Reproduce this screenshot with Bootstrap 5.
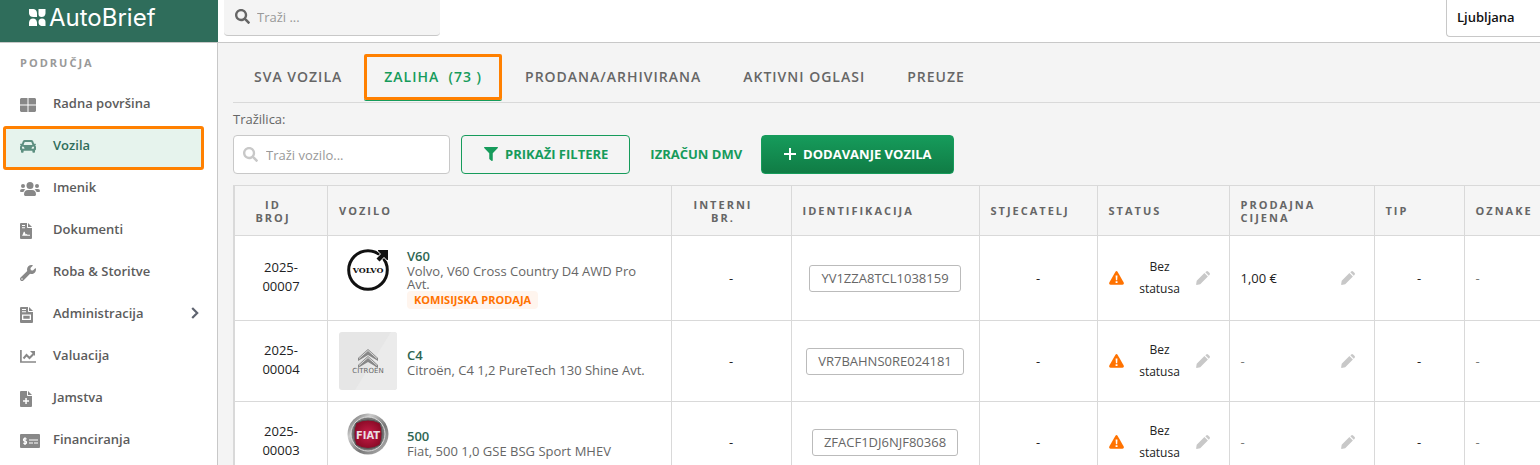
<!DOCTYPE html>
<html lang="hr">
<head>
<meta charset="utf-8">
<meta name="viewport" content="width=device-width, initial-scale=1">
<title>AutoBrief – Vozila</title>
<link rel="stylesheet" href="https://cdn.jsdelivr.net/npm/bootstrap@5.3.0/dist/css/bootstrap.min.css">
<style>
:root{--ab-green:#169b5b;--ab-dark:#2f6d5b;--ab-line:#d9d9d9;--ab-grey:#666;--ab-orange:#ff8000}
body{font-family:"Open Sans","Noto Sans",sans-serif;font-size:13px;line-height:18px;color:#222;background:#f4f4f4}
svg{display:block;flex:none}
.topbar{height:43px;border-bottom:1px solid #c8c8c8}
.brand-box{width:218px;background:var(--ab-dark);padding:0 0 7px 29px;font:400 24px/28px Inter,sans-serif;gap:3px}
.global-search{width:216px;height:36px;background:#f4f4f4;border-bottom:1px solid #c8c8c8;border-radius:0 0 4px 4px;margin-left:6px;padding:0 11px 2px;gap:7px}
.global-search svg{color:#666}
.bare-input{border:0;background:none;outline:0;min-width:0;padding:0}
.bare-input::placeholder{color:#999;opacity:1}
.city-select{width:94px;height:37px;border:1px solid #c8c8c8;border-width:0 0 1px 1px;border-radius:0 0 0 4px;appearance:none;padding:0 10px 2px;background:#fff;color:#111;font-weight:600}
.sidebar{width:218px;border-right:1px solid #c8c8c8;padding:11px 13px 0 3px}
.side-title{font-size:11px;font-weight:700;letter-spacing:2px;color:#999;padding-left:17px;margin-bottom:13px}
.side-link{height:42px;padding:0 5px 6px 17px;color:#5c5c5c;font-weight:600;text-decoration:none}
.side-link .ico{width:33px;color:#888;padding-top:3px}
.side-link.active{height:44px;margin:-1px 0;padding:0 2px 6px 14px;border:3px solid var(--ab-orange);border-radius:3px;background:#e6f3ed;color:var(--ab-dark)}
.side-link.active .ico{color:#5d8f80}
.content-area{min-width:0;padding-left:15px}
.tabs{height:60px;border-bottom:1px solid var(--ab-line);padding-top:11px}
.tabs a{display:flex;align-items:center;padding:0 21px;height:46px;font-size:14px;font-weight:600;letter-spacing:1px;color:#666;text-decoration:none;white-space:pre}
.tabs a.active{color:var(--ab-green);border:3px solid var(--ab-orange);border-radius:2px;padding:0 17px;margin:0 2px 0 1px;box-shadow:0 1px 0 var(--ab-green)}
.search-label{color:#666;margin:7px 0}
.toolbar{font-weight:700;margin-bottom:11px}
.toolbar .field{width:217px;height:39px;background:#fff;border:1px solid #c8c8c8;border-radius:4px;padding:0 9px;margin-right:11px}
.toolbar .field svg{color:#c8c8c8}
.toolbar .btn{height:39px;font-size:13px;line-height:18px;font-weight:700;border-radius:4px;display:flex;align-items:center;padding:0 21px 1px 22px;gap:7px}
.btn-line{border:1px solid var(--ab-green);color:var(--ab-green)}
.btn-fill{border:1px solid var(--ab-green);color:#fff;background:linear-gradient(#169b5b,#107c45)}
.text-action{color:var(--ab-green);text-decoration:none;margin:0 19px 1px 20px}
.table-box{border-left:1px solid var(--ab-line)}
.stock{table-layout:fixed;margin:0;border-collapse:collapse;width:100%;background:#fff}
.stock th,.stock td{border:1px solid var(--ab-line);vertical-align:middle;padding:10px 11px}
.stock th:last-child,.stock td:last-child{border-right:0}
.stock td{padding:11px}
.stock th{height:50px;font-size:11px;line-height:13px;letter-spacing:2px;font-weight:700;color:#666;background:#f5f5f5}
.stock th.mid{padding-right:27px;text-align:center}
.stock td.mid{text-align:center}
.stock td.id-cell{line-height:19px;padding-bottom:13px}
.brand-slot{width:58px;height:58px;margin-right:10px}
.model{color:#2f6653;font-weight:600;text-decoration:none;line-height:18px;display:block}
.descr{color:#666;line-height:13px}
.tag-sale{width:fit-content;height:18px;padding:0 7px;font-size:11px;font-weight:700;color:#ff7200;background:#fff5ee;border-radius:4px;line-height:18px}
.vin{display:block;width:fit-content;margin:0 auto;border:1px solid #bbb;border-radius:3px;font-size:13px;line-height:25px;padding:0 11px;color:#666}
.stat{font-size:12px;line-height:22px;width:50px;text-align:center}
.stock td.edit{padding:0 19px 0 11px}
.pen{border:0;background:none;padding:0;color:#c8c8c8}
.muted{color:#777}
</style>
</head>
<body>
<svg width="0" height="0" class="position-absolute" aria-hidden="true">
  <symbol id="i-search" viewBox="0 0 512 512"><path fill="currentColor" d="M505 442.7L405.3 343c-4.500-4.500-10.600-7-17-7H372c27.600-35.300 44-79.700 44-128C416 93.100 322.900 0 208 0S0 93.100 0 208s93.100 208 208 208c48.300 0 92.700-16.400 128-44v16.300c0 6.400 2.500 12.500 7 17l99.700 99.700c9.400 9.400 24.600 9.400 33.900 0l28.300-28.300c9.400-9.400 9.400-24.600.1-34zM208 336c-70.700 0-128-57.200-128-128 0-70.700 57.200-128 128-128 70.700 0 128 57.200 128 128 0 70.700-57.200 128-128 128z"/></symbol>
  <symbol id="i-pen" viewBox="0 0 14 14"><path fill="currentColor" d="M8.400 2.100l3.500 3.500L4.200 13.300.6 13.900.1 13.400.7 9.800zM9.300 1.200l.9-.8q.9-.8 1.900 0l1.500 1.500q.8.900 0 1.900l-.8.900z"/></symbol>
  <symbol id="i-warn" viewBox="0 0 15 14"><path fill="#ff7200" d="M6.300.9q1.200-1.700 2.400 0l6 10.600q.7 1.900-1.200 2.200H1.500Q-.4 13.400.3 11.500z"/><path fill="#fff" d="M6.600 4.500h1.900l-.3 4.700H6.900zM6.600 10.200h1.900v1.800H6.600z"/></symbol>
</svg>

<div class="d-flex flex-column vh-100 overflow-hidden">
<header class="topbar bg-white d-flex flex-shrink-0 align-items-start">
  <div class="brand-box text-white d-flex align-items-center align-self-stretch">
    <svg width="17" height="17" viewBox="0 0 17 17" fill="#fff"><path d="M0 0h4.500Q8 .5 8 4.500V8H4.500Q.5 8 0 4.500zM9.500 0H16.500v4.500q-.5 3.500-4 3.500-3 0-3-3zM0 17v-3.500q.5-4 4-4t4 4V17zM16.500 17h-4q-3-.5-3-4t3.500-3.500 3.500 3.500z"/></svg>
    <span>AutoBrief</span>
  </div>
  <label class="global-search d-flex align-items-center"><svg width="15" height="15"><use href="#i-search"/></svg><input class="bare-input" type="text" placeholder="Traži ..." aria-label="Traži"></label>
  <select class="city-select ms-auto" aria-label="Poslovnica"><option>Ljubljana</option></select>
</header>

<div class="d-flex flex-grow-1 overflow-hidden">
<nav class="sidebar bg-white flex-shrink-0">
  <div class="side-title">PODRUČJA</div>
  <a href="#" class="side-link d-flex align-items-center"><span class="ico"><svg width="16" height="14" viewBox="0 0 16 14" fill="currentColor"><path d="M1 0h6.500v6.500H0V1zM8.500 0H15l1 1v5.500H8.500zM0 7.500h7.500V14H1l-1-1zM8.500 7.500H16V13l-1 1H8.500z"/></svg></span>Radna površina</a>
  <a href="#" class="side-link active d-flex align-items-center"><span class="ico"><svg width="16" height="13" viewBox="0 0 16 13" fill="currentColor"><path fill-rule="evenodd" d="M4.800 0h6.400q1.400 0 2 1.300l.9 2.400h1.400q.6.300.4.900l-.7.900q.8.600.8 1.500v2.400l-1 1v1.600q0 .8-.8.8h-1q-.8 0-.8-.8v-1.200H3.600V12q0 .8-.8.8h-1Q1 12.800 1 12v-1.600l-1-1V7q0-.9.800-1.500l-.7-.9q-.2-.6.4-.9h1.400l.9-2.400Q3.400 0 4.800 0zm.4 2q-.6 0-.8.600l-.8 2.300h8.800l-.8-2.300q-.2-.6-.8-.6zM3 6.600a1.100 1.100 0 100 2.200h1.500Q4.400 7 3 6.600zm10 0q-1.400.4-1.500 2.200H13a1.100 1.100 0 000-2.200z"/></svg></span>Vozila</a>
  <a href="#" class="side-link d-flex align-items-center"><span class="ico"><svg width="20" height="14" viewBox="0 0 20 14" fill="currentColor"><circle cx="10" cy="3.500" r="3.500"/><circle cx="3" cy="4" r="2"/><circle cx="17" cy="4" r="2"/><path d="M4 12.600Q4 8 8 8h4q4 0 4 4.600 0 1.400-1.200 1.400H5.200Q4 14 4 12.600zM0 9q0-2 2-2h2l1.400.6Q3.600 8.700 3.400 10H1q-1 0-1-1zM20 9q0-2-2-2h-2l-1.400.6q1.800 1.100 2 2.400H19q1 0 1-1z"/></svg></span>Imenik</a>
  <a href="#" class="side-link d-flex align-items-center"><span class="ico"><svg width="12" height="16" viewBox="0 0 12 16" fill="currentColor"><path fill-rule="evenodd" d="M1 0h6v4.200q0 .8.800.8H12v10q0 1-1 1H1q-1 0-1-1V1q0-1 1-1zm1 2v1h3V2zm0 2.200v1h3v-1zM2 12.800h8v-1H7.500l-1-.8-.8.5L4.600 8.800h-.8L2.500 12z"/><path d="M8 0l4 4H8z"/></svg></span>Dokumenti</a>
  <a href="#" class="side-link d-flex align-items-center"><span class="ico"><svg width="16" height="16" viewBox="0 0 512 512" fill="currentColor"><path d="M507.700 109.100c-2.200-9-13.500-12.100-20.100-5.500l-74.400 74.400-67.900-11.300-11.300-67.900 74.400-74.400c6.600-6.600 3.400-17.900-5.700-20.200-47.400-11.700-99.500.9-136.600 37.900-39.600 39.600-50.500 97.100-34 147.200L18.700 402.800c-25 25-25 65.500 0 90.500s65.500 25 90.500 0l213.200-213.200c50.100 16.700 107.500 5.700 147.400-34.200 37.100-37.100 49.700-89.300 37.900-136.800zM64 472a24 24 0 110-48 24 24 0 010 48z"/></svg></span>Roba &amp; Storitve</a>
  <a href="#" class="side-link d-flex align-items-center"><span class="ico"><svg width="13" height="16" viewBox="0 0 13 16" fill="currentColor"><path fill-rule="evenodd" d="M1 0h7v4.200q0 .8.800.8H13v10q0 1-1 1H1q-1 0-1-1V1q0-1 1-1zm1 2v1h4V2zm0 2.200v1h4v-1zM2 7.500V13h9V7.500zm1.300 1.200h6.400v3H3.300z"/><path d="M9 0l4 4H9z"/></svg></span>Administracija<svg class="ms-auto" width="8" height="12" viewBox="0 0 8 12" fill="none" stroke="#5f6470" stroke-width="2.200"><path d="M1.200 1l5 5-5 5"/></svg></a>
  <a href="#" class="side-link d-flex align-items-center"><span class="ico"><svg width="16" height="13" viewBox="0 0 16 13" fill="none" stroke="currentColor"><path stroke-width="1.700" d="M.9 0v12H16"/><path stroke-width="2" d="M3.500 8.500L6.500 5l3 3 4-4"/><path fill="currentColor" stroke="none" d="M10 1h5v5z"/></svg></span>Valuacija</a>
  <a href="#" class="side-link d-flex align-items-center"><span class="ico"><svg width="12" height="16" viewBox="0 0 12 16" fill="currentColor"><path fill-rule="evenodd" d="M1 0h6v4.200q0 .8.800.8H12v10q0 1-1 1H1q-1 0-1-1V1q0-1 1-1zm4.300 7v2.300H3v1.500h2.300V13h1.500v-2.200H9V9.300H6.800V7z"/><path d="M8 0l4 4H8z"/></svg></span>Jamstva</a>
  <a href="#" class="side-link d-flex align-items-center"><span class="ico"><svg width="20" height="14" viewBox="0 0 20 14"><rect width="20" height="14" rx="1" fill="currentColor"/><path fill="none" stroke="#fff" stroke-width="1.200" d="M9 6h9M9 9h4m1 0h4M6.700 5Q3.600 4 3.500 5.500T5 7t1.500 1.700-3.100.4M5 3.200V11"/></svg></span>Financiranja</a>
</nav>

<main class="content-area flex-grow-1">
  <nav class="tabs d-flex">
    <a href="#">SVA VOZILA</a>
    <a href="#" class="active">ZALIHA  (73 )</a>
    <a href="#">PRODANA/ARHIVIRANA</a>
    <a href="#">AKTIVNI OGLASI</a>
    <a href="#">PREUZE</a>
  </nav>
  <label class="search-label d-block" for="q">Tražilica:</label>
  <div class="toolbar d-flex align-items-center">
    <div class="field d-flex align-items-center gap-2"><svg width="15" height="15"><use href="#i-search"/></svg><input id="q" class="bare-input" type="text" placeholder="Traži vozilo..."></div>
    <button type="button" class="btn btn-line"><svg width="14" height="14" viewBox="0 0 512 512" fill="currentColor"><path d="M488 0H24C2.700 0-8 25.900 7 41l185 185v206c0 7.800 3.800 15.200 10.200 19.700l80 56c15.800 11 37.800-.2 37.800-19.700V226L505 41c15-15.100 4.300-41-17-41z"/></svg>PRIKAŽI FILTERE</button>
    <a href="#" class="text-action">IZRAČUN DMV</a>
    <button type="button" class="btn btn-fill"><svg width="12" height="12" viewBox="0 0 12 12" stroke="#fff" stroke-width="2"><path d="M6 0v12M0 6h12"/></svg>DODAVANJE VOZILA</button>
  </div>
  <div class="table-box">
  <table class="stock">
    <colgroup><col style="width:93px"><col><col style="width:120px"><col style="width:188px"><col style="width:118px"><col style="width:132px"><col style="width:145px"><col style="width:90px"><col style="width:76px"></colgroup>
    <thead><tr><th class="mid">ID BROJ</th><th>VOZILO</th><th class="mid">INTERNI BR.</th><th>IDENTIFIKACIJA</th><th>STJECATELJ</th><th>STATUS</th><th>PRODAJNA CIJENA</th><th>TIP</th><th>OZNAKE</th></tr></thead>
    <tbody>
    <tr>
      <td class="mid id-cell">2025-<br>00007</td>
      <td><div class="d-flex align-items-center"><div class="brand-slot flex-shrink-0 d-flex justify-content-center align-items-start">
        <svg width="42" height="42" viewBox="0 0 42 42"><circle cx="21" cy="21" r="19.300" fill="none" stroke="#111" stroke-width="3"/><path d="M31 1h10v10h-1l-3-3-4.500 4.500-3-3L34 5l-3-3z" fill="#111" stroke="#fff" stroke-width="1.500" paint-order="stroke"/><text x="21" y="24" text-anchor="middle" font-family="DejaVu Serif" font-weight="700" font-size="8" fill="#111">VOLVO</text></svg></div>
        <div><a href="#" class="model">V60</a><div class="descr">Volvo, V60 Cross Country D4 AWD Pro Avt.</div><div class="tag-sale">KOMISIJSKA PRODAJA</div></div></div></td>
      <td class="mid">-</td><td class="mid"><span class="vin">YV1ZZA8TCL1038159</span></td><td class="mid">-</td>
      <td class="edit"><div class="d-flex align-items-center justify-content-between"><svg width="15" height="14"><use href="#i-warn"/></svg><span class="stat">Bez statusa</span><button type="button" class="pen" aria-label="Uredi status"><svg width="14" height="14"><use href="#i-pen"/></svg></button></div></td>
      <td class="edit"><div class="d-flex align-items-center justify-content-between"><span>1,00 €</span><button type="button" class="pen" aria-label="Uredi cijenu"><svg width="14" height="14"><use href="#i-pen"/></svg></button></div></td>
      <td class="mid">-</td><td class="muted">-</td>
    </tr>
    <tr>
      <td class="mid id-cell">2025-<br>00004</td>
      <td><div class="d-flex align-items-center"><div class="brand-slot flex-shrink-0">
        <svg width="58" height="58" viewBox="0 0 58 58"><rect width="58" height="58" rx="3" fill="#e6e6e6"/><path d="M52 0h3q3 0 3 3v52q0 3-3 3H16z" fill="#ebebeb"/><path d="M19 26l10-9 10 9v3l-10-6-10 6zM19 33l10-9 10 9v3l-10-6-10 6z" fill="#888"/><path d="M20 26.500l9-8 9 8M20 33.500l9-8 9 8" fill="none" stroke="#ddd" stroke-width="1"/><text x="29" y="41" text-anchor="middle" font-family="DejaVu Sans" font-size="7" fill="#666">CITROËN</text></svg></div>
        <div><a href="#" class="model">C4</a><div class="descr">Citroën, C4 1,2 PureTech 130 Shine Avt.</div></div></div></td>
      <td class="mid">-</td><td class="mid"><span class="vin">VR7BAHNS0RE024181</span></td><td class="mid">-</td>
      <td class="edit"><div class="d-flex align-items-center justify-content-between"><svg width="15" height="14"><use href="#i-warn"/></svg><span class="stat">Bez statusa</span><button type="button" class="pen" aria-label="Uredi status"><svg width="14" height="14"><use href="#i-pen"/></svg></button></div></td>
      <td class="edit"><div class="d-flex align-items-center justify-content-between"><span class="muted">-</span><button type="button" class="pen" aria-label="Uredi cijenu"><svg width="14" height="14"><use href="#i-pen"/></svg></button></div></td>
      <td class="mid">-</td><td class="muted">-</td>
    </tr>
    <tr>
      <td class="mid id-cell">2025-<br>00003</td>
      <td><div class="d-flex align-items-center"><div class="brand-slot flex-shrink-0 d-flex justify-content-center align-items-start">
        <svg width="42" height="42" viewBox="0 0 42 42"><defs><linearGradient id="chrome" x1="0" y1="0" x2="1" y2="1"><stop offset="0" stop-color="#555"/><stop offset=".3" stop-color="#ccc"/><stop offset=".6" stop-color="#777"/><stop offset="1" stop-color="#bbb"/></linearGradient><radialGradient id="red"><stop offset="0" stop-color="#c81e48"/><stop offset="1" stop-color="#8d0b28"/></radialGradient></defs><circle cx="21" cy="21" r="20.500" fill="url(#chrome)"/><circle cx="21" cy="21" r="17" fill="#777" stroke="#ddd"/><path d="M9 10q12-6 24 0 4 11 0 22-12 7-24 0-4-11 0-22z" fill="url(#red)" stroke="#555"/><text x="21" y="26" text-anchor="middle" font-family="DejaVu Sans Condensed,Liberation Sans" font-size="11" font-weight="700" fill="#e8dfe2">FIAT</text></svg></div>
        <div><a href="#" class="model">500</a><div class="descr">Fiat, 500 1,0 GSE BSG Sport MHEV</div></div></div></td>
      <td class="mid">-</td><td class="mid"><span class="vin">ZFACF1DJ6NJF80368</span></td><td class="mid">-</td>
      <td class="edit"><div class="d-flex align-items-center justify-content-between"><svg width="15" height="14"><use href="#i-warn"/></svg><span class="stat">Bez statusa</span><button type="button" class="pen" aria-label="Uredi status"><svg width="14" height="14"><use href="#i-pen"/></svg></button></div></td>
      <td class="edit"><div class="d-flex align-items-center justify-content-between"><span class="muted">-</span><button type="button" class="pen" aria-label="Uredi cijenu"><svg width="14" height="14"><use href="#i-pen"/></svg></button></div></td>
      <td class="mid">-</td><td class="muted">-</td>
    </tr>
    </tbody>
  </table>
  </div>
</main>
</div>
</div>
<script src="https://cdn.jsdelivr.net/npm/bootstrap@5.3.0/dist/js/bootstrap.bundle.min.js"></script>
</body>
</html>
